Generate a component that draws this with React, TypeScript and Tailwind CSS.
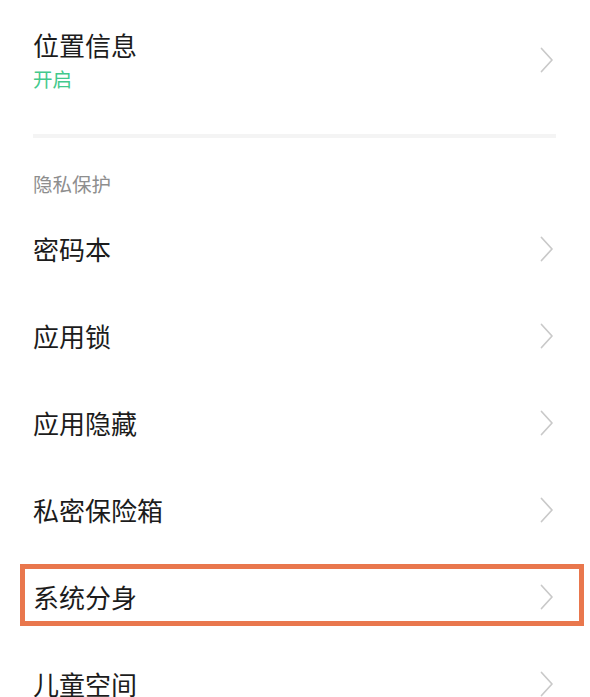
const rows = ['密码本', '应用锁', '应用隐藏', '私密保险箱', '系统分身', '儿童空间'];

function Chevron() {
  return (
    <svg width="14" height="26" viewBox="0 0 14 26" fill="none" className="shrink-0">
      <path d="M1.5 1.5 L12 13 L1.5 24.5" stroke="#c9c9c9" strokeWidth="1.7" strokeLinecap="round" strokeLinejoin="round" />
    </svg>
  );
}

export default function App() {
  return (
    <div
      className="w-[590px] h-[697px] overflow-hidden bg-white"
      style={{ fontFamily: '"Noto Sans CJK SC", "Noto Sans", sans-serif' }}
    >
      <div className="pl-[33px] pr-[36px]">
        {/* Location */}
        <div className="flex items-center justify-between pt-[28px]">
          <div>
            <p className="text-[26px] leading-[34px] text-[#1c1c1c]">位置信息</p>
            <p className="mt-[4px] text-[19.5px] leading-[26px] text-[#43c98c]">开启</p>
          </div>
          <Chevron />
        </div>

        <div className="mt-[42px] h-[4px] bg-[#f4f4f4] mr-[-2px]" />

        {/* Section header */}
        <p className="mt-[33px] text-[19.5px] leading-[26px] text-[#8e8e8e]">隐私保护</p>

        <div className="mt-[8px]">
          {rows.map((label, i) => (
            <div key={label} className="relative flex items-center justify-between h-[87px]">
              <span className="text-[26px] leading-[34px] text-[#1c1c1c]">{label}</span>
              <Chevron />
              {i === 4 && (
                <div className="absolute left-[-13px] right-[-30px] top-[11px] h-[62px] border-[5px] border-[#e9774d]" />
              )}
            </div>
          ))}
        </div>
      </div>
    </div>
  );
}
